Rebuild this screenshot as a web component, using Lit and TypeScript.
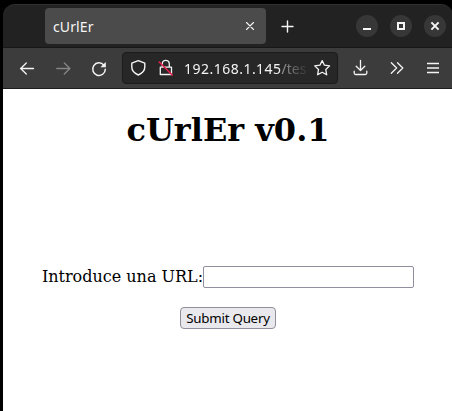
import { LitElement, html, css, svg } from "lit";
import { customElement } from "lit/decorators.js";

const icon = (w: number, h: number, body: unknown) =>
  html`<svg width=${w} height=${h} viewBox="0 0 ${w} ${h}" fill="none" stroke="currentColor" stroke-width="1.3" stroke-linecap="round" stroke-linejoin="round">${body}</svg>`;

@customElement("browser-tabs")
class BrowserTabs extends LitElement {
  static styles = css`
    :host { display: flex; box-sizing: border-box; height: 44px; padding: 3px 7px 0 42px; background: #222; border-top: 1px solid #303030; border-bottom: 1px solid #171717; border-radius: 12px 12px 0 0; color: #f5f5f5; }
    svg { display: block; flex: none; }
    .tab { box-sizing: border-box; width: 221px; height: 36px; border-radius: 4px; background: #4b4b4b; display: flex; align-items: center; justify-content: space-between; padding: 0 11px 0 8px; }
    .title { font: 14px/20px "Noto Sans", sans-serif; letter-spacing: 0.1px; padding-top: 1px; }
    .add { margin: 12px 0 0 15px; }
    .controls { display: flex; gap: 12px; margin: 7px 0 0 auto; }
    .control { width: 22px; height: 22px; border-radius: 50%; background: #373737; }
  `;
  render() {
    return html`
      <div class="tab"><span class="title">cUrlEr</span>${icon(10, 10, svg`<path stroke-width="1.1" d="M1.5 1.5l7 7M8.5 1.5l-7 7"/>`)}</div>
      <div class="add">${icon(13, 13, svg`<path stroke-width="1.4" d="M6.5 1v11M1 6.5h11"/>`)}</div>
      <div class="controls">
        <div class="control">${icon(22, 22, svg`<path stroke-width="2" stroke-linecap="butt" d="M7 14h8"/>`)}</div>
        <div class="control">${icon(22, 22, svg`<rect x="8" y="8" width="6" height="6" stroke-width="2" stroke-linejoin="miter"/>`)}</div>
        <div class="control">${icon(22, 22, svg`<path stroke-width="2" stroke-linecap="butt" d="M7.4 7.4l7.2 7.2M14.6 7.4l-7.2 7.2"/>`)}</div>
      </div>`;
  }
}

@customElement("browser-toolbar")
class BrowserToolbar extends LitElement {
  static styles = css`
    :host { display: flex; box-sizing: border-box; height: 41px; padding: 4px 11px 0 15px; background: #3c3c3c; border-bottom: 1px solid #1c1c1c; color: #f4f4f4; }
    svg { display: block; flex: none; }
    .nav { display: flex; gap: 18px; margin-top: 8px; }
    .off { color: #858585; }
    .address { box-sizing: border-box; width: 216px; height: 32px; margin-left: 14px; padding: 0 6px 0 7px; display: flex; align-items: center; background: #272727; border: 1px solid #1b1b1b; border-radius: 4px; }
    .lock { margin-left: 9px; }
    .url { width: 125px; margin-left: 9px; padding-top: 1px; white-space: nowrap; font: 14px/22px "Noto Sans", sans-serif; letter-spacing: 0.48px; mask-image: linear-gradient(to right, #000 94px, transparent 126px); }
    .path { color: #aaa; letter-spacing: 0; }
    .star { margin-left: auto; }
    .tools { display: flex; gap: 18px; margin: 7px 0 0 auto; }
    .tools svg:first-child { margin-right: 1px; }
  `;
  render() {
    return html`
      <div class="nav">
        ${icon(18, 18, svg`<path d="M15.5 8.5h-13M8.3 3l-5.6 5.5 5.6 5.5"/>`)}
        <span class="off">${icon(18, 18, svg`<path d="M2.8 8.5h13M10.3 3l5.6 5.5-5.6 5.5"/>`)}</span>
        ${icon(18, 18, svg`<path stroke-width="1.5" d="M13.9 5.2A6.3 6.3 0 1 0 15.3 9.2"/><path fill="currentColor" stroke="none" d="M15.8 2v5.3h-5.4z"/>`)}
      </div>
      <div class="address">
        ${icon(18, 18, svg`<path stroke-width="1.4" d="M8.3 1.7L14.8 4.2V8c0 3.3-2.5 6.2-6.5 8-4-1.8-6.5-4.7-6.5-8V4.2z"/>`)}
        <span class="lock">${icon(18, 18, svg`<path d="M5.3 8V4.8a3.5 3.5 0 0 1 7 0V8M3.3 8.2h11.2v7.3H3.3z"/><path stroke="#e8204e" stroke-width="1.6" d="M2.2 3l13 13"/>`)}</span>
        <div class="url">192.168.1.145<span class="path">/tes</span></div>
        <span class="star">${icon(18, 18, svg`<path d="M9.2 1.6l2.2 4.6 5.2.7-3.8 3.6.9 5.3-4.5-2.5-4.6 2.5.9-5.3-3.8-3.6 5.2-.7z"/>`)}</span>
      </div>
      <div class="tools">
        ${icon(18, 18, svg`<path d="M9.5 1.5v10M5.2 7.2l4.3 4.3 4.3-4.3M3.2 12.2v1.8q0 1.5 1.5 1.5h9.6q1.5 0 1.5-1.5v-1.8"/>`)}
        ${icon(18, 18, svg`<path d="M3.3 3.7l5.3 5.3-5.3 5.3M9.5 3.7l5.3 5.3-5.3 5.3"/>`)}
        ${icon(18, 18, svg`<path stroke-linecap="butt" d="M3 4.5h12M3 9h12M3 13.5h12"/>`)}
      </div>`;
  }
}

@customElement("app-root")
class AppRoot extends LitElement {
  static styles = css`
    :host { display: flex; box-sizing: border-box; height: 411px; padding: 4px 0 0 3px; background: #000; overflow: hidden; }
    .window { flex: none; width: 450px; display: flex; flex-direction: column; }
    .page { flex: 1; background: #fff; color: #000; display: flex; flex-direction: column; align-items: center; font: 16px/19px "DejaVu Serif", serif; }
    h1 { margin: 22px 0 0; font-size: 32px; line-height: 38px; font-weight: 700; }
    .field { display: flex; align-items: center; margin-top: 117px; height: 22px; }
    .caption { padding-bottom: 2px; }
    input { box-sizing: border-box; width: 211px; height: 22px; margin: 0; padding: 1px 2px; border: 1px solid #8f8f9d; border-radius: 2px; background: #fff; outline: none; }
    button { box-sizing: border-box; width: 96px; height: 22px; margin: 19px 0 0; padding: 0; border: 1px solid #8f8f9d; border-radius: 4px; background: #e9e9ed; color: #000; font: 13.333px/20px "Noto Sans", sans-serif; letter-spacing: -0.25px; white-space: nowrap; }
  `;
  render() {
    return html`
      <div class="window">
        <browser-tabs></browser-tabs>
        <browser-toolbar></browser-toolbar>
        <main class="page">
          <h1>cUrlEr v0.1</h1>
          <label class="field"><span class="caption">Introduce una URL:</span><input type="text" /></label>
          <button type="button">Submit Query</button>
        </main>
      </div>`;
  }
}
